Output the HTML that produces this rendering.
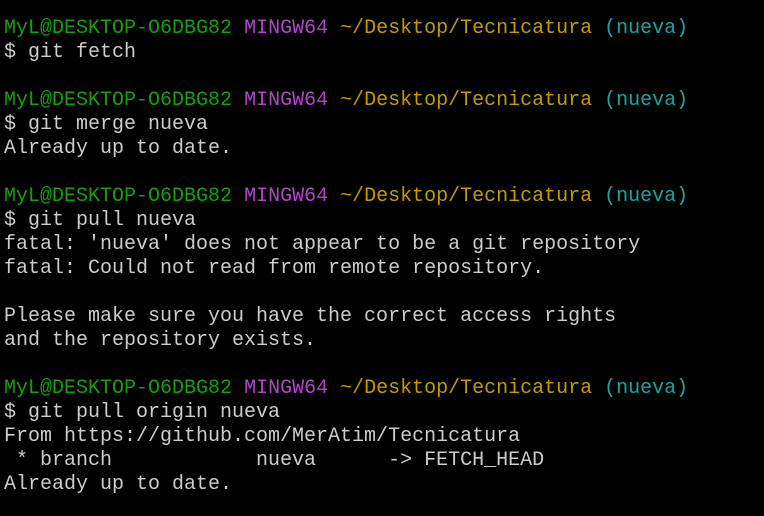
<!DOCTYPE html>
<html><head><style>
html,body{margin:0;padding:0;background:#000;width:764px;height:516px;overflow:hidden}
pre{margin:0;padding:17px 0 0 4px;font-family:"Liberation Mono",monospace;font-size:20px;line-height:24px;color:#cccccc;letter-spacing:0}
.g{color:#13a10e}.m{color:#b148c6}.y{color:#c19c00}.c{color:#1ba5a5}
</style></head><body><pre><span class="g">MyL@DESKTOP-O6DBG82</span> <span class="m">MINGW64</span> <span class="y">~/Desktop/Tecnicatura</span> <span class="c">(nueva)</span>
$ git fetch

<span class="g">MyL@DESKTOP-O6DBG82</span> <span class="m">MINGW64</span> <span class="y">~/Desktop/Tecnicatura</span> <span class="c">(nueva)</span>
$ git merge nueva
Already up to date.

<span class="g">MyL@DESKTOP-O6DBG82</span> <span class="m">MINGW64</span> <span class="y">~/Desktop/Tecnicatura</span> <span class="c">(nueva)</span>
$ git pull nueva
fatal: 'nueva' does not appear to be a git repository
fatal: Could not read from remote repository.

Please make sure you have the correct access rights
and the repository exists.

<span class="g">MyL@DESKTOP-O6DBG82</span> <span class="m">MINGW64</span> <span class="y">~/Desktop/Tecnicatura</span> <span class="c">(nueva)</span>
$ git pull origin nueva
From https://github.com/MerAtim/Tecnicatura
 * branch            nueva      -&gt; FETCH_HEAD
Already up to date.
</pre></body></html>
